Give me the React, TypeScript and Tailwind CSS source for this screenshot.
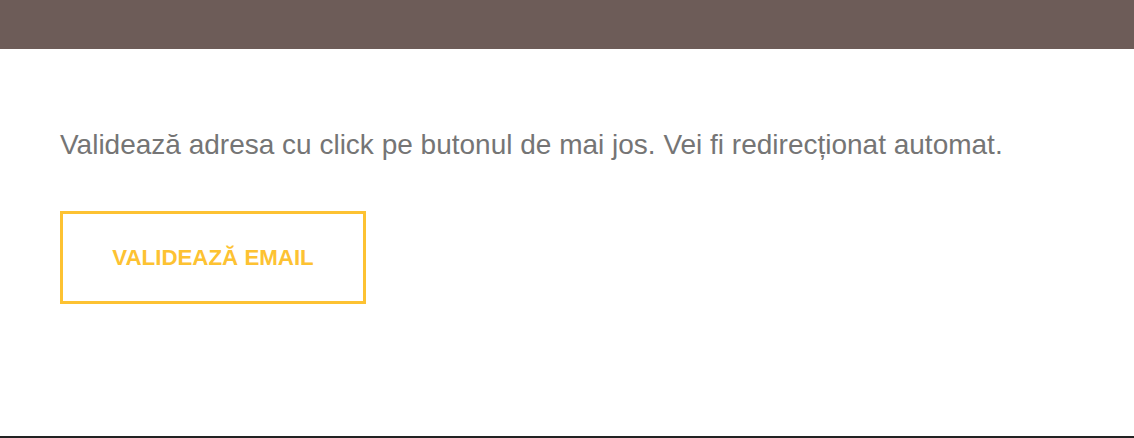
export default function App() {
  return (
    <div className="w-[1134px] h-[438px] bg-white flex flex-col" style={{ fontFamily: '"Liberation Sans", Arial, sans-serif' }}>
      <div className="h-[49px] bg-[#6d5c58] shrink-0" />
      <div className="flex-1 pl-[60px] pt-[80px]">
        <p className="text-[28px] leading-[32px] text-[#757575]">
          Validează adresa cu click pe butonul de mai jos. Vei fi redirecționat automat.
        </p>
        <div className="mt-[50px] w-[306px] h-[93px] border-[3px] border-[#fdc232] flex items-center justify-center">
          <span className="text-[22.3px] font-bold text-[#fdc232]">VALIDEAZĂ EMAIL</span>
        </div>
      </div>
      <div className="h-[2px] bg-[#222222] shrink-0" />
    </div>
  );
}
